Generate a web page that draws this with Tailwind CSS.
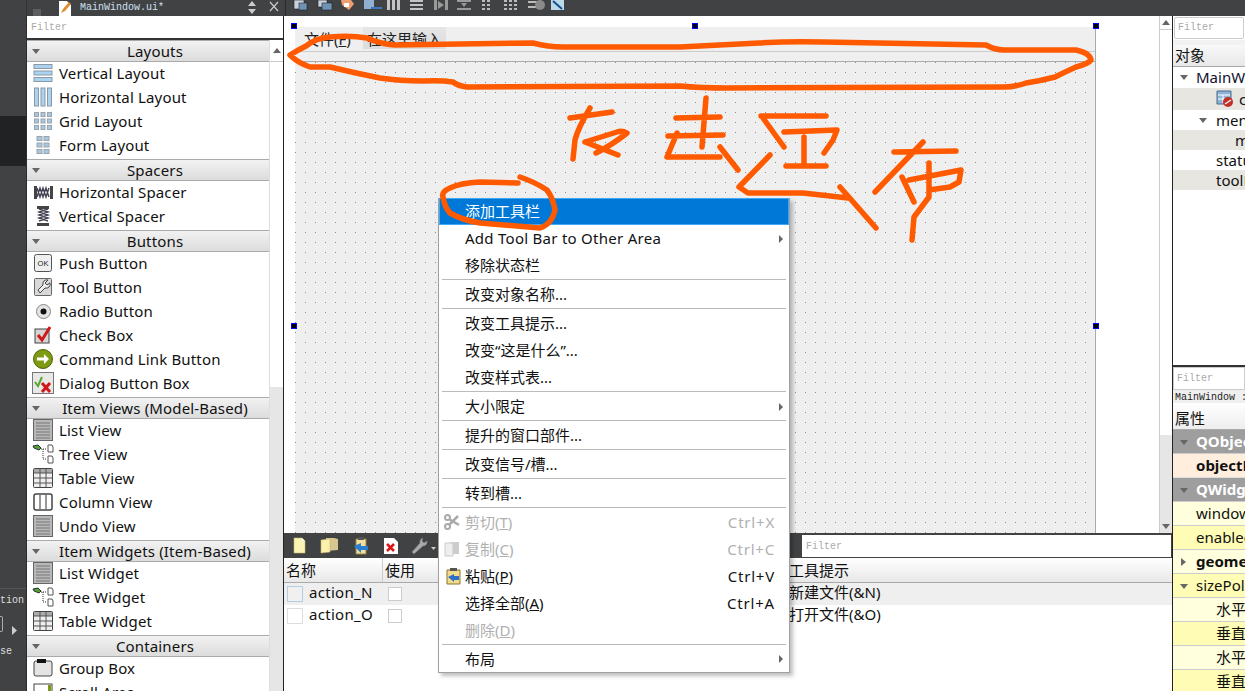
<!DOCTYPE html>
<html lang="zh-CN">
<head>
  <meta charset="UTF-8">
  <title>Qt Designer - MainWindow.ui</title>
  <script src="https://cdn.jsdelivr.net/npm/@tailwindcss/browser@4"></script>
</head>
<body class="overflow-hidden bg-[#404244]">
  <!-- shared icons -->
  <svg class="hidden">
    <symbol id="tri" viewBox="0 0 8 5"><path d="M0 0h8L4 5z" fill="#666"/></symbol>
    <symbol id="list" viewBox="0 0 20 22"><rect x=".5" y=".5" width="19" height="21" fill="#b8b8b8" stroke="#666"/><path d="M3 4h14M3 7h14M3 10h14M3 13h14M3 16h14M3 19h14" stroke="#777"/></symbol>
    <symbol id="tree" viewBox="0 0 22 20"><path d="M1 2l5-1 3 3-2 2-5-2z" fill="#5aa02c" stroke="#234"/><path d="M9 5h6M11 5v10h4" stroke="#333" stroke-dasharray="1 1" fill="none"/><path d="M16 1h4l1 2v5h-5zM16 12h4l1 2v5h-5z" fill="#fff" stroke="#555"/></symbol>
    <symbol id="table" viewBox="0 0 20 20"><rect x=".5" y=".5" width="19" height="19" rx="1" fill="#eee" stroke="#444"/><path d="M1 1h18v4H1z" fill="#aaa"/><path d="M1 5h18M1 10h18M1 15h18M7 1v18M13 1v18" stroke="#555"/></symbol>
  </svg>

  <div class="flex h-[691px] w-[1245px] flex-col overflow-hidden font-['Noto_Sans','Noto_Sans_CJK_SC',sans-serif] text-[15px] leading-none text-[#111]">
    <!-- editor tool bar -->
    <div class="flex h-4 shrink-0 items-end bg-[#404244]">
      <div class="w-[27px] h-full border-r border-[#333]"></div>
      <svg class="ml-[6px] h-[9px] w-[9px]" viewBox="0 0 9 9"><rect x="0" y="2" width="8" height="7" fill="#5c5e60"/></svg>
      <svg class="ml-4 h-4 w-[14px]" viewBox="0 0 14 16"><path d="M1 1h8l4 4v11H1z" fill="#fff"/><path d="M3 13l2-4 6-7 2 2-6 7z" fill="#e08a2c"/></svg>
      <span class="ml-[8px] w-[168px] self-center font-['Liberation_Mono',monospace] text-[10px] text-[#cfe0f0]">MainWindow.ui*</span>
      <svg class="h-4 w-[8px]" viewBox="0 0 8 16"><path d="M0 6l4-5 4 5zM0 9h8l-4 5z" fill="#ccc"/></svg>
      <svg class="ml-[13px] h-4 w-[10px]" viewBox="0 0 10 16"><path d="M1 2l8 9M9 2l-8 9" stroke="#ccc" stroke-width="1.2"/></svg>
      <div class="ml-[6px] h-4 w-px bg-[#2a2a2a]"></div>
      <!-- form editor icons, cut off by the crop -->
      <svg class="ml-[5px] h-[11px] w-[280px] self-start" viewBox="0 0 280 11">
        <g fill="#c8d0d8" stroke="#223" stroke-width=".6">
          <rect x="3" y="0" width="10" height="9"/><rect x="8" y="3" width="8" height="7" fill="#6f93b5"/>
          <rect x="27" y="0" width="9" height="7"/><rect x="31" y="3" width="10" height="7" fill="#6f93b5"/>
        </g>
        <path d="M50 0h10l3 4-5 6-7-5z" fill="#f0a070"/><rect x="53" y="3" width="5" height="4" fill="#fff"/>
        <rect x="73" y="0" width="10" height="9" fill="#8fb0d0"/><path d="M80 8h11" stroke="#3a78c0" stroke-width="2"/>
        <path d="M96 0h3v10h-3zM101 0h3v10h-3zM106 0h3v10h-3z" fill="#c4c4c4"/>
        <path d="M119 0h13v2h-13zM119 4h13v2h-13zM119 8h13v2h-13z" fill="#c4c4c4"/>
        <path d="M143 0h3v10h-3zM154 0h3v10h-3zM147 1l6 4-6 4z" fill="#9a9a9a"/>
        <path d="M166 0h14v2h-14zM166 8h14v2h-14zM170 3h6l-3 4z" fill="#9a9a9a"/>
        <path d="M191 0h3v2h-3zM196 0h3v2h-3zM191 4h3v2h-3zM196 4h3v2h-3zM191 8h3v2h-3zM196 8h3v2h-3z" fill="#bbb"/>
        <path d="M213 0h3v2h-3zM218 0h3v2h-3zM223 0h3v2h-3zM213 4h3v2h-3zM218 4h3v2h-3zM223 4h3v2h-3zM213 8h3v2h-3zM218 8h3v2h-3zM223 8h3v2h-3z" fill="#bbb"/>
        <path d="M237 1h10v2h-10zM237 6h8v2h-8z" fill="#bbb"/><circle cx="249" cy="5" r="5" fill="#8a8a8a"/>
        <rect x="260" y="0" width="13" height="10" fill="#bcd8ea"/><path d="M262 1l9 8" stroke="#16508c" stroke-width="2"/>
      </svg>
    </div>

    <div class="flex min-h-0 flex-1">
      <!-- mode bar -->
      <aside class="relative w-[27px] shrink-0 border-r border-[#2c2c2c] bg-[#404244] text-[#ddd]">
        <div class="mt-[100px] h-[50px] bg-[#202224]"></div>
        <div class="absolute left-0 top-[572px] h-px w-full bg-[#555]"></div>
        <span class="absolute left-0 top-[580px] font-['Liberation_Mono',monospace] text-[10px]">tion</span>
        <div class="absolute left-0 top-[600px] h-[16px] w-[3px] rounded-r-[2px] border-y border-r border-[#aaa]"></div>
        <svg class="absolute left-3 top-[610px] h-[9px] w-[5px]" viewBox="0 0 5 9"><path d="M0 0l5 4.500-5 4.500z" fill="#ccc"/></svg>
        <span class="absolute left-0 top-[631px] font-['Liberation_Mono',monospace] text-[10px]">se</span>
      </aside>

      <!-- widget box -->
      <section class="flex w-[257px] shrink-0 flex-col border-r border-[#222] bg-white tracking-[0.16px]">
        <div class="flex h-[24px] shrink-0 items-center border-b-2 border-[#333] pl-1 pt-[2px] font-['Liberation_Mono',monospace] text-[10px] tracking-normal text-[#aaa]">Filter</div>
        <div class="flex min-h-0 flex-1">
          <div class="w-[242px] shrink-0">
            <div class="relative flex h-[22px] items-center justify-center border-y border-[#aaa] bg-gradient-to-b from-[#f2f2f2] to-[#dcdcdc] pl-[14px]"><svg class="absolute left-[5px] top-2 h-[5px] w-2"><use href="#tri"/></svg>Layouts</div>
            <div class="flex h-6 items-center gap-[6px] pb-[2px] pl-[6px]"><svg class="h-5 w-5" viewBox="0 0 20 20"><g fill="#a9d3ef" stroke="#8a98a8"><rect x="1" y="1.500" width="18" height="4"/><rect x="1" y="8" width="18" height="4"/><rect x="1" y="14.500" width="18" height="4"/></g></svg>Vertical Layout</div>
            <div class="flex h-6 items-center gap-[6px] pb-[2px] pl-[6px]"><svg class="h-5 w-5" viewBox="0 0 20 20"><g fill="#a9d3ef" stroke="#8a98a8"><rect x="1.500" y="1" width="4" height="18"/><rect x="8" y="1" width="4" height="18"/><rect x="14.500" y="1" width="4" height="18"/></g></svg>Horizontal Layout</div>
            <div class="flex h-6 items-center gap-[6px] pb-[2px] pl-[6px]"><svg class="h-5 w-5" viewBox="0 0 20 20"><g fill="#a9c8e0" stroke="#9aa4ae"><rect x="1.500" y="1.500" width="4" height="4"/><rect x="8" y="1.500" width="4" height="4"/><rect x="14.500" y="1.500" width="4" height="4"/><rect x="1.500" y="8" width="4" height="4"/><rect x="8" y="8" width="4" height="4"/><rect x="14.500" y="8" width="4" height="4"/><rect x="1.500" y="14.500" width="4" height="4"/><rect x="8" y="14.500" width="4" height="4"/><rect x="14.500" y="14.500" width="4" height="4"/></g></svg>Grid Layout</div>
            <div class="flex h-6 items-center gap-[6px] pb-[2px] pl-[6px]"><svg class="h-5 w-5" viewBox="0 0 20 20"><g fill="#a9c8e0" stroke="#9aa4ae"><rect x="4" y="1.500" width="5" height="4"/><rect x="11" y="1.500" width="5" height="4"/><rect x="4" y="8" width="5" height="4"/><rect x="11" y="8" width="5" height="4"/><rect x="4" y="14.500" width="5" height="4"/><rect x="11" y="14.500" width="5" height="4"/></g></svg>Form Layout</div>

            <div class="relative mt-px flex h-[22px] items-center justify-center border-y border-[#aaa] bg-gradient-to-b from-[#f2f2f2] to-[#dcdcdc] pl-[14px]"><svg class="absolute left-[5px] top-2 h-[5px] w-2"><use href="#tri"/></svg>Spacers</div>
            <div class="flex h-6 items-center gap-[6px] pb-[2px] pl-[6px]"><svg class="h-5 w-5" viewBox="0 0 20 20"><path d="M1 4h3v13H1zM17 4h3v13h-3z" fill="#444"/><path d="M4 6l3 9 3-9 3 9 3-9M4 15l3-9 3 9 3-9 3 9" fill="none" stroke="#445" stroke-width="1.400"/></svg>Horizontal Spacer</div>
            <div class="flex h-6 items-center gap-[6px] pb-[2px] pl-[6px]"><svg class="h-5 w-5" viewBox="0 0 20 20"><path d="M4 0h12v3H4zM4 17h12v3H4z" fill="#444"/><path d="M6 3l9 3-9 3 9 3-9 3M15 3l-9 3 9 3-9 3 9 3" fill="none" stroke="#445" stroke-width="1.400"/></svg>Vertical Spacer</div>

            <div class="relative mt-px flex h-[22px] items-center justify-center border-y border-[#aaa] bg-gradient-to-b from-[#f2f2f2] to-[#dcdcdc] pl-[14px]"><svg class="absolute left-[5px] top-2 h-[5px] w-2"><use href="#tri"/></svg>Buttons</div>
            <div class="flex h-6 items-center gap-[6px] pb-[2px] pl-[6px]"><svg class="h-5 w-5" viewBox="0 0 20 20"><rect x="1.500" y="1.500" width="17" height="17" rx="2" fill="#efefef" stroke="#555"/><text x="10" y="13" font-size="7.500" font-family="Liberation Sans" text-anchor="middle" fill="#222">OK</text></svg>Push Button</div>
            <div class="flex h-6 items-center gap-[6px] pb-[2px] pl-[6px]"><svg class="h-5 w-5" viewBox="0 0 20 20"><rect x="1.500" y="1.500" width="17" height="17" rx="1" fill="#d8d8d8" stroke="#666"/><path d="M15 3a4 4 0 0 0-5 5l-5 5 2 3 5-5a4 4 0 0 0 5-5l-3 2-2-2z" fill="#eee" stroke="#444"/></svg>Tool Button</div>
            <div class="flex h-6 items-center gap-[6px] pb-[2px] pl-[6px]"><svg class="h-5 w-5" viewBox="0 0 20 20"><circle cx="10.500" cy="10.500" r="7" fill="#e4e4e4" stroke="#888"/><circle cx="10.500" cy="10.500" r="3" fill="#111"/></svg>Radio Button</div>
            <div class="flex h-6 items-center gap-[6px] pb-[2px] pl-[6px]"><svg class="h-5 w-5" viewBox="0 0 20 20"><rect x="2" y="4" width="14" height="14" fill="#d5d5d5" stroke="#444"/><path d="M5 10l4 5 8-13" fill="none" stroke="#d01818" stroke-width="3"/></svg>Check Box</div>
            <div class="flex h-6 items-center gap-[6px] pb-[2px] pl-[6px]"><svg class="h-5 w-5" viewBox="0 0 20 20"><circle cx="10" cy="10" r="9.500" fill="#7d9a10" stroke="#4f6308"/><path d="M4 8.500h7V5l5 5-5 5v-3.500H4z" fill="#fff"/></svg>Command Link Button</div>
            <div class="flex h-6 items-center gap-[5px] pb-[2px] pl-[5px]"><svg class="h-[22px] w-[22px]" viewBox="0 0 22 22"><rect x=".5" y=".5" width="21" height="21" fill="#e8e8e8" stroke="#777"/><path d="M3 10l3 4 4-9" fill="none" stroke="#58a82c" stroke-width="2"/><path d="M10 11l8 9M18 11l-8 9" stroke="#d01818" stroke-width="3"/></svg>Dialog Button Box</div>

            <div class="relative mt-px flex h-[22px] items-center justify-center border-y border-[#aaa] bg-gradient-to-b from-[#f2f2f2] to-[#dcdcdc] pl-[14px]"><svg class="absolute left-[5px] top-2 h-[5px] w-2"><use href="#tri"/></svg>Item Views (Model-Based)</div>
            <div class="flex h-6 items-center gap-[6px] pb-[2px] pl-[6px]"><svg class="h-[22px] w-5"><use href="#list"/></svg>List View</div>
            <div class="flex h-6 items-center gap-[5px] pb-[2px] pl-[5px]"><svg class="h-5 w-[22px]"><use href="#tree"/></svg>Tree View</div>
            <div class="flex h-6 items-center gap-[6px] pb-[2px] pl-[6px]"><svg class="h-5 w-5"><use href="#table"/></svg>Table View</div>
            <div class="flex h-6 items-center gap-[6px] pb-[2px] pl-[6px]"><svg class="h-5 w-5" viewBox="0 0 20 20"><rect x="1" y="2" width="18" height="16" rx="2" fill="#fff" stroke="#444" stroke-width="1.500"/><path d="M7 3v14M13 3v14" stroke="#777" stroke-width="1.500"/></svg>Column View</div>
            <div class="flex h-6 items-center gap-[6px] pb-[2px] pl-[6px]"><svg class="h-[22px] w-5"><use href="#list"/></svg>Undo View</div>

            <div class="relative mt-px flex h-[22px] items-center justify-center border-y border-[#aaa] bg-gradient-to-b from-[#f2f2f2] to-[#dcdcdc] pl-[14px]"><svg class="absolute left-[5px] top-2 h-[5px] w-2"><use href="#tri"/></svg>Item Widgets (Item-Based)</div>
            <div class="flex h-6 items-center gap-[6px] pb-[2px] pl-[6px]"><svg class="h-[22px] w-5"><use href="#list"/></svg>List Widget</div>
            <div class="flex h-6 items-center gap-[5px] pb-[2px] pl-[5px]"><svg class="h-5 w-[22px]"><use href="#tree"/></svg>Tree Widget</div>
            <div class="flex h-6 items-center gap-[6px] pb-[2px] pl-[6px]"><svg class="h-5 w-5"><use href="#table"/></svg>Table Widget</div>

            <div class="relative mt-px flex h-[22px] items-center justify-center border-y border-[#aaa] bg-gradient-to-b from-[#f2f2f2] to-[#dcdcdc] pl-[14px]"><svg class="absolute left-[5px] top-2 h-[5px] w-2"><use href="#tri"/></svg>Containers</div>
            <div class="flex h-6 items-center gap-[6px] pb-[2px] pl-[6px]"><svg class="h-5 w-5" viewBox="0 0 20 20"><rect x="1" y="3" width="18" height="15" rx="2" fill="#e4e4e4" stroke="#444"/><rect x="4" y="1" width="9" height="4" fill="#111"/></svg>Group Box</div>
            <div class="flex h-6 items-center gap-[6px] pb-[2px] pl-[6px]"><svg class="h-5 w-5" viewBox="0 0 20 20"><rect x="1" y="2" width="18" height="16" fill="#fff" stroke="#444"/><rect x="15" y="3" width="3" height="7" fill="#7d9a10"/></svg>Scroll Area</div>
          </div>
          <!-- scroll bar -->
          <div class="flex w-[14px] flex-col border-l border-[#ddd] bg-[#e6e6e6]">
            <div class="flex h-[22px] shrink-0 items-center justify-center border-b border-[#ccc] bg-white"><svg class="h-[5px] w-2" viewBox="0 0 8 5"><path d="M0 5h8L4 0z" fill="#666"/></svg></div>
            <div class="h-[325px] shrink-0 bg-white"></div>
          </div>
        </div>
      </section>

      <!-- centre: form editor and action editor -->
      <main class="flex w-[889px] shrink-0 flex-col border-r border-[#222]">
        <div class="relative flex h-[517px] shrink-0 bg-white">
          <div class="ml-[11px] mt-[11px] flex h-[506px] w-[801px] flex-col border-r border-[#aaa] bg-[#efefef]">
            <div class="flex h-[25px] shrink-0 items-start border-b border-[#ccc] text-[#222]">
              <span class="ml-[9px] mt-[5px] w-[59px]">文件(<span class="underline">F</span>)</span>
              <span class="flex h-[22px] w-[83px] items-center justify-center bg-gradient-to-b from-[#e6e6e6] to-[#dcdcdc] pt-[2px]">在这里输入</span>
            </div>
            <div class="h-[10px] shrink-0 border-b border-[#aaa]"></div>
            <div class="flex-1 bg-[conic-gradient(at_1px_1px,transparent_270deg,#8c8c8c_270deg)] bg-[length:10px_10px]"></div>
          </div>
          <!-- selection handles -->
          <div class="absolute left-[7px] top-[7px] h-[6px] w-[6px] border border-[#0000ff] bg-black"></div>
          <div class="absolute left-[408px] top-[7px] h-[6px] w-[6px] border border-[#0000ff] bg-black"></div>
          <div class="absolute left-[809px] top-[7px] h-[6px] w-[6px] border border-[#0000ff] bg-black"></div>
          <div class="absolute left-[7px] top-[307px] h-[6px] w-[6px] border border-[#0000ff] bg-black"></div>
          <div class="absolute left-[809px] top-[307px] h-[6px] w-[6px] border border-[#0000ff] bg-black"></div>
          <!-- scroll bar -->
          <div class="absolute right-0 top-0 flex h-full w-[13px] flex-col border-l border-[#ccc] bg-[#e6e6e6]">
            <div class="flex h-[14px] shrink-0 items-center justify-center border-b border-[#ccc] bg-white"><svg class="h-[5px] w-2" viewBox="0 0 8 5"><path d="M0 5h8L4 0z" fill="#666"/></svg></div>
            <div class="h-[405px] shrink-0 bg-white"></div>
            <div class="mt-auto flex h-[14px] items-center justify-center"><svg class="h-[5px] w-2"><use href="#tri"/></svg></div>
          </div>
        </div>

        <!-- action editor -->
        <div class="flex h-[25px] shrink-0 items-center bg-[#404244]">
          <svg class="ml-[9px] h-[17px] w-[13px]" viewBox="0 0 13 17"><path d="M1 1h8l3 3v12H1z" fill="#fbf3b4" stroke="#c9b870" stroke-width=".6"/><path d="M9 1v3h3z" fill="#fff"/></svg>
          <svg class="ml-[14px] h-[17px] w-[20px]" viewBox="0 0 20 17"><path d="M6 1h8l4 1v11l-12 1z" fill="#d8c690"/><path d="M1 3l9-1v13l-9 1z" fill="#fbf0ac" stroke="#c9b870" stroke-width=".6"/></svg>
          <svg class="ml-[12px] h-[18px] w-[18px]" viewBox="0 0 18 18"><path d="M4 2h10v15H4z" fill="#f2dfa0" stroke="#9a8440"/><rect x="6" y="0" width="6" height="3" fill="#555"/><path d="M2 9l7-3v3h7v4H9v3z" fill="#2a80d0"/></svg>
          <svg class="ml-[13px] h-[18px] w-[16px]" viewBox="0 0 16 18"><path d="M1 1h10l4 4v12H1z" fill="#fff"/><path d="M4 7l7 7M11 7l-7 7" stroke="#d81818" stroke-width="2.500"/></svg>
          <svg class="ml-[11px] h-[18px] w-[20px]" viewBox="0 0 20 18"><path d="M13 1a4 4 0 0 0-3 5l-8 9 2 2 9-8a4 4 0 0 0 4-5l-3 2-2-2z" fill="#aaa" stroke="#777" stroke-width=".6"/></svg>
          <svg class="ml-[1px] mt-[5px] h-[3px] w-[5px]" viewBox="0 0 5 3"><path d="M0 0h5L2.500 3z" fill="#ccc"/></svg>
          <div class="ml-auto mr-px flex h-[22px] w-[369px] items-center bg-white pl-1 pt-[3px] font-['Liberation_Mono',monospace] text-[10px] text-[#aaa]">Filter</div>
        </div>
        <div class="flex h-[25px] shrink-0 items-center border-b border-[#aaa] bg-gradient-to-b from-white to-[#e8e8e8]">
          <span class="flex h-full w-[99px] items-center border-r border-[#ccc] pl-[2px]">名称</span>
          <span class="flex h-full items-center pl-[2px]">使用</span>
          <span class="ml-auto w-[383px]">工具提示</span>
        </div>
        <div class="flex h-[22px] shrink-0 items-center bg-[#efefef]">
          <span class="ml-[3px] h-4 w-4 border border-[#b5cde0] bg-[#f0f0f0]"></span>
          <span class="ml-[6px] mb-[3px] w-[79px] tracking-[0.3px]">action_N</span>
          <span class="h-[14px] w-[14px] border border-[#ccc] bg-white"></span>
          <span class="ml-auto mb-[3px] w-[383px]">新建文件(&amp;N)</span>
        </div>
        <div class="flex h-[22px] shrink-0 items-center bg-white">
          <span class="ml-[3px] h-4 w-4 border border-[#ddd]"></span>
          <span class="ml-[6px] mb-[3px] w-[79px] tracking-[0.3px]">action_O</span>
          <span class="h-[14px] w-[14px] border border-[#ccc] bg-white"></span>
          <span class="ml-auto mb-[3px] w-[383px]">打开文件(&amp;O)</span>
        </div>
        <div class="flex-1 bg-white"></div>
      </main>

      <!-- object inspector and property editor -->
      <aside class="flex min-w-0 flex-1 flex-col overflow-hidden whitespace-nowrap bg-white">
        <div class="m-px flex h-[22px] shrink-0 items-center rounded-[2px] border border-[#ccc] pl-[3px] font-['Liberation_Mono',monospace] text-[10px] text-[#aaa]">Filter</div>
        <div class="h-[5px] shrink-0 bg-[#f2f2f2]"></div>
        <div class="flex h-[22px] shrink-0 items-center border-b border-[#aaa] bg-gradient-to-b from-[#f8f8f8] to-[#e8e8e8] pl-[2px]">对象</div>
        <div class="relative flex h-[21px] shrink-0 items-center pl-[23px] text-[#101030]"><svg class="absolute left-[7px] top-2 h-[5px] w-2"><use href="#tri"/></svg>MainWindow</div>
        <div class="flex h-[22px] shrink-0 items-center gap-[5px] bg-[#e8e6e1] pl-[43px]"><svg class="h-[18px] w-[18px] shrink-0" viewBox="0 0 18 18"><path d="M1 1h14v13H1z" fill="#8fb4d8" stroke="#4a6a8a"/><path d="M2 5h12M2 9h12M7 5v8" stroke="#fff"/><circle cx="12" cy="12" r="5" fill="#c03028"/><path d="M9 14l6-4" stroke="#eee" stroke-width="1.500"/></svg>centralwidget</div>
        <div class="relative flex h-5 shrink-0 items-center pl-[43px]"><svg class="absolute left-[26px] top-2 h-[5px] w-2"><use href="#tri"/></svg>menubar</div>
        <div class="flex h-5 shrink-0 items-center bg-[#e8e6e1] pl-[62px]">menu_F</div>
        <div class="flex h-5 shrink-0 items-center pl-[43px]">statusbar</div>
        <div class="flex h-5 shrink-0 items-center bg-[#e8e6e1] pl-[43px]">toolBar</div>
        <div class="h-[175px] shrink-0"></div>

        <div class="h-[2px] shrink-0 bg-[#333]"></div>
        <div class="flex h-[23px] shrink-0 items-center border border-[#ccc] pl-[3px] font-['Liberation_Mono',monospace] text-[10px] text-[#aaa]">Filter</div>
        <div class="flex h-[13px] shrink-0 items-center bg-[#efefef] pl-[2px] pt-[3px] font-['Liberation_Mono',monospace] text-[10px] text-[#222]">MainWindow : QMainWindow</div>
        <div class="flex h-[27px] shrink-0 items-center border-b border-[#aaa] bg-gradient-to-b from-white to-[#eee] pl-[2px] pt-[5px]">属性</div>
        <div class="relative flex h-6 shrink-0 items-center border-b border-[#ccc] bg-[#9e9e9e] pl-[23px] font-bold text-white"><svg class="absolute left-[7px] top-[10px] h-[5px] w-2"><use href="#tri"/></svg>QObject</div>
        <div class="flex h-6 shrink-0 items-center border-b border-[#ddd] bg-[#ffeedd] pl-[23px] font-bold">objectName</div>
        <div class="relative flex h-6 shrink-0 items-center border-b border-[#ccc] bg-[#9e9e9e] pl-[23px] font-bold text-white"><svg class="absolute left-[7px] top-[10px] h-[5px] w-2"><use href="#tri"/></svg>QWidget</div>
        <div class="flex h-6 shrink-0 items-center border-b border-[#ccc] bg-[#ffffdd] pl-[23px]">windowModality</div>
        <div class="flex h-6 shrink-0 items-center border-b border-[#ccc] bg-[#fffdb5] pl-[23px]">enabled</div>
        <div class="relative flex h-6 shrink-0 items-center border-b border-[#ccc] bg-[#ffffdd] pl-[23px] font-bold"><svg class="absolute left-[8px] top-2 h-2 w-[5px]" viewBox="0 0 5 8"><path d="M0 0l5 4-5 4z" fill="#666"/></svg>geometry</div>
        <div class="relative flex h-6 shrink-0 items-center border-b border-[#ccc] bg-[#fffdb5] pl-[23px]"><svg class="absolute left-[7px] top-[10px] h-[5px] w-2"><use href="#tri"/></svg>sizePolicy</div>
        <div class="flex h-6 shrink-0 items-center border-b border-[#ccc] bg-[#ffffdd] pl-[43px]">水平策略</div>
        <div class="flex h-6 shrink-0 items-center border-b border-[#ccc] bg-[#fffdb5] pl-[43px]">垂直策略</div>
        <div class="flex h-6 shrink-0 items-center border-b border-[#ccc] bg-[#ffffdd] pl-[43px]">水平伸展</div>
        <div class="flex h-6 shrink-0 items-center border-b border-[#ccc] bg-[#fffdb5] pl-[43px]">垂直伸展</div>
      </aside>
    </div>
  </div>

  <!-- context menu -->
  <div class="absolute left-[438px] top-[198px] w-[352px] border-x border-b border-[#a0a0a0] bg-white font-['Noto_Sans','Noto_Sans_CJK_SC',sans-serif] text-[15px] leading-none text-[#111] shadow-[3px_3px_4px_rgba(0,0,0,0.25)]">
    <div class="flex h-[27px] items-center border border-[#3fa9f5] bg-[#0078d7] pl-[25px] text-white">添加工具栏</div>
    <div class="flex h-[27px] items-center justify-between pl-[26px] pr-[6px] tracking-[0.27px]">Add Tool Bar to Other Area<svg class="h-2 w-1"  viewBox="0 0 4 8"><path d="M0 0l4 4-4 4z" fill="#666"/></svg></div>
    <div class="flex h-[27px] items-center pl-[26px]">移除状态栏</div>
    <div class="mx-[3px] mb-px h-px bg-[#bbb]"></div>
    <div class="flex h-[27px] items-center pl-[26px]">改变对象名称...</div>
    <div class="mx-[3px] mb-px h-px bg-[#bbb]"></div>
    <div class="flex h-[27px] items-center pl-[26px]">改变工具提示...</div>
    <div class="flex h-[27px] items-center pl-[26px]">改变“这是什么”...</div>
    <div class="flex h-[27px] items-center pl-[26px]">改变样式表...</div>
    <div class="mx-[3px] mb-px h-px bg-[#bbb]"></div>
    <div class="flex h-[27px] items-center justify-between pl-[26px] pr-[6px]">大小限定<svg class="h-2 w-1" viewBox="0 0 4 8"><path d="M0 0l4 4-4 4z" fill="#666"/></svg></div>
    <div class="mx-[3px] mb-px h-px bg-[#bbb]"></div>
    <div class="flex h-[27px] items-center pl-[26px]">提升的窗口部件...</div>
    <div class="mx-[3px] mb-px h-px bg-[#bbb]"></div>
    <div class="flex h-[27px] items-center pl-[26px]">改变信号/槽...</div>
    <div class="mx-[3px] mb-px h-px bg-[#bbb]"></div>
    <div class="flex h-[27px] items-center pl-[26px]">转到槽...</div>
    <div class="mx-[3px] mb-px h-px bg-[#bbb]"></div>
    <div class="relative flex h-[27px] items-center justify-between pl-[26px] pr-[14px] text-[#b0b0b0]"><svg class="absolute left-[5px] top-[5px] h-4 w-4" viewBox="0 0 16 16"><circle cx="3.500" cy="3.500" r="2.500" fill="none" stroke="#aaa" stroke-width="2"/><circle cx="3.500" cy="12.500" r="2.500" fill="none" stroke="#aaa" stroke-width="2"/><path d="M5 5l10 6M5 11l9-9" stroke="#aaa" stroke-width="2.500"/></svg><span>剪切(<span class="underline">T</span>)</span><span class="tracking-[0.8px]">Ctrl+X</span></div>
    <div class="relative flex h-[27px] items-center justify-between pl-[26px] pr-[14px] text-[#b0b0b0]"><svg class="absolute left-[5px] top-[5px] h-4 w-4" viewBox="0 0 16 16"><path d="M6 1h9v12H6z" fill="#ccc"/><path d="M1 2h8v13H1z" fill="#eee" stroke="#ccc"/></svg><span>复制(<span class="underline">C</span>)</span><span class="tracking-[0.8px]">Ctrl+C</span></div>
    <div class="relative flex h-[27px] items-center justify-between pl-[26px] pr-[14px]"><svg class="absolute left-[7px] top-[5px] h-[17px] w-[15px]" viewBox="0 0 15 17"><path d="M1 2h13v14H1z" fill="#f2dc8c" stroke="#8a7430"/><rect x="4" y="0" width="7" height="3" fill="#555"/><path d="M2 9l6-3v2h5v4H8v2z" fill="#2a70c8"/></svg><span>粘贴(<span class="underline">P</span>)</span><span class="tracking-[0.8px]">Ctrl+V</span></div>
    <div class="flex h-[27px] items-center justify-between pl-[26px] pr-[14px]"><span>选择全部(<span class="underline">A</span>)</span><span class="tracking-[0.8px]">Ctrl+A</span></div>
    <div class="flex h-[27px] items-center pl-[26px] text-[#b0b0b0]"><span>删除(<span class="underline">D</span>)</span></div>
    <div class="mx-[3px] mb-px h-px bg-[#bbb]"></div>
    <div class="flex h-[26px] items-center justify-between pl-[26px] pr-[6px]">布局<svg class="h-2 w-1" viewBox="0 0 4 8"><path d="M0 0l4 4-4 4z" fill="#666"/></svg></div>
  </div>

  <!-- orange pen annotations drawn on the screenshot -->
  <svg class="pointer-events-none absolute left-0 top-0 h-[691px] w-[1245px]" viewBox="0 0 1245 691" fill="none" stroke="#ff5a00" stroke-width="5.500" stroke-linecap="round" stroke-linejoin="round">
    <path d="M290 55Q298 50 306 46Q316 38 330 37Q350 35 367 38Q380 44 395 45L533 43Q548 47 563 47L680 47L759 43Q790 41 824 42L986 45Q995 50 1004 50L1076 50Q1090 53 1091 60Q1088 64 1076 67Q1065 72 1055 77Q1040 81 1026 83Q1015 87 1004 87L727 88Q700 88 680 86L467 87Q458 86 453 82Q440 80 423 81Q400 81 380 78Q355 73 330 67Q318 67 310 67Q298 63 290 55Z"/>
    <path d="M570 118L612 112M590 108Q578 128 575 140L573 159M585 142L618 155M596 153Q612 145 627 133Q622 130 617 132L585 142"/>
    <path d="M706 98L702 147M676 118L720 117M668 136L723 135M677 133L667 157L720 157M720 147L738 170"/>
    <path d="M761 116L826 116M763 118L784 147M784 132L837 130L833 140L824 153M804 137L804 163M786 166L826 166M770 155L739 187L748 193L803 193L848 198M840 187L876 228"/>
    <path d="M894 152L956 151M923 142L875 192M929 163L929 197L914 217L912 240M902 177L914 202M909 180L961 170L959 182L950 187L929 190"/>
    <path d="M518 183L480 182Q460 183 450 188Q441 192 443 197Q445 208 450 213Q462 220 480 223L540 228Q552 224 555 210Q553 198 547 190Q535 182 520 177"/>
  </svg>
</body>
</html>
